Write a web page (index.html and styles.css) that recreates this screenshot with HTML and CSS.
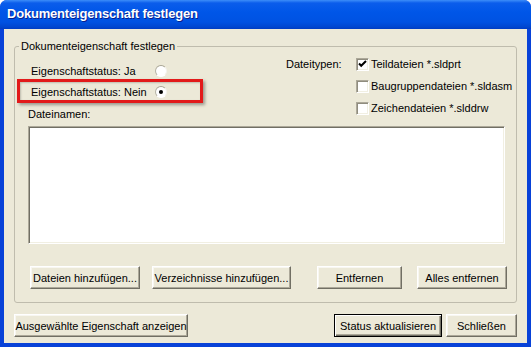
FILE: index.html
```html
<!DOCTYPE html>
<html lang="de">
<head>
    <meta charset="UTF-8">
    <title>Dokumenteigenschaft festlegen</title>
    <link rel="stylesheet" href="styles.css">
</head>
<body>
    <div class="window">
        <div class="titlebar">
            <span class="title">Dokumenteigenschaft festlegen</span>
        </div>

        <div class="client">
            <fieldset class="group">
                <legend>Dokumenteigenschaft festlegen</legend>

                <div class="top">
                    <div class="status">
                        <div class="status-row">
                            <span class="status-text">Eigenschaftstatus: Ja</span>
                            <span class="radio"></span>
                        </div>
                        <div class="status-row">
                            <span class="status-text">Eigenschaftstatus: Nein</span>
                            <span class="radio checked"></span>
                        </div>
                        <div class="highlight"></div>
                        <div class="field-label">Dateinamen:</div>
                    </div>

                    <div class="types">
                        <div class="types-label">Dateitypen:</div>
                        <div class="types-list">
                            <div class="check-row">
                                <span class="checkbox">
                                    <svg width="11" height="11" viewBox="0 0 11 11"><path d="M2 4.5 L4.2 6.8 L9 2" fill="none" stroke="#000" stroke-width="2"/></svg>
                                </span>
                                Teildateien *.sldprt
                            </div>
                            <div class="check-row">
                                <span class="checkbox"></span>
                                Baugruppendateien *.sldasm
                            </div>
                            <div class="check-row">
                                <span class="checkbox"></span>
                                Zeichendateien *.slddrw
                            </div>
                        </div>
                    </div>
                </div>

                <div class="listbox"></div>

                <div class="actions">
                    <button class="btn btn-add-files">Dateien hinzufügen...</button>
                    <button class="btn btn-add-dirs">Verzeichnisse hinzufügen...</button>
                    <button class="btn btn-remove">Entfernen</button>
                    <button class="btn btn-remove-all">Alles entfernen</button>
                </div>
            </fieldset>

            <div class="footer">
                <button class="btn btn-show">Ausgewählte Eigenschaft anzeigen</button>
                <div class="footer-right">
                    <button class="btn btn-default btn-update">Status aktualisieren</button>
                    <button class="btn btn-close">Schließen</button>
                </div>
            </div>
        </div>
    </div>
</body>
</html>
```

FILE: styles.css
```css
body {
    margin: 0;
    padding: 0;
    background-color: #fff;
    font-family: "Liberation Sans", Arial, sans-serif;
    font-size: 11px;
    color: #000;
}

.window {
    width: 531px;
    height: 347px;
    box-sizing: border-box;
    border-radius: 7px 7px 0 0;
    background-color: #0842d8;
    overflow: hidden;
}

.titlebar {
    height: 29px;
    box-sizing: border-box;
    padding: 6px 0 0 7px;
    background: linear-gradient(to bottom, #3d8ef9 0px, #0b5deb 3px, #0056e8 12px, #0052e2 22px, #0046d0 27px, #003cc2 29px);
}

.title {
    color: #fff;
    font-weight: bold;
    font-size: 13px;
    letter-spacing: -0.2px;
    text-shadow: 1px 1px 0 #0a1e8c;
}

.client {
    margin: 0 4px;
    height: 314px;
    box-sizing: border-box;
    padding: 11px 10px 6px;
    background-color: #ece9d8;
}

.group {
    margin: 0;
    padding: 0 12px 13px 13px;
    border: 1px solid #bfbcad;
    border-radius: 3px;
    min-width: 0;
}

.group legend {
    margin-left: -9px;
    padding: 0 2px;
    line-height: 13px;
}

.top {
    display: flex;
}

.status {
    position: relative;
    flex-shrink: 0;
    width: 258px;
    padding-top: 7px;
}

.status-row {
    display: flex;
    align-items: center;
    height: 21px;
    padding-left: 3px;
}

.status-text {
    width: 124px;
}

.radio {
    width: 12px;
    height: 12px;
    box-sizing: border-box;
    border-radius: 50%;
    border: 1px solid;
    border-color: #a7a493 #f4f3ee #fff #b5b2a4;
    background-color: #fff;
    position: relative;
}

.radio.checked::after {
    content: "";
    position: absolute;
    left: 3px;
    top: 3px;
    width: 4px;
    height: 4px;
    border-radius: 50%;
    background-color: #000;
}

.highlight {
    position: absolute;
    left: -11px;
    top: 26px;
    width: 186px;
    height: 24px;
    box-sizing: border-box;
    border: 3px solid #e21a1a;
    box-shadow: 2px 2px 3px rgba(0, 0, 0, 0.35), inset 1px 1px 2px rgba(0, 0, 0, 0.2);
}

.field-label {
    margin-top: 6px;
    line-height: 13px;
}

.types {
    display: flex;
    flex-shrink: 0;
    white-space: nowrap;
}

.types-label {
    width: 70px;
    height: 22px;
    line-height: 22px;
}

.check-row {
    display: flex;
    align-items: center;
    height: 22px;
}

.checkbox {
    width: 13px;
    height: 13px;
    box-sizing: border-box;
    margin-right: 2px;
    border: 1px solid;
    border-color: #aca899 #fff #fff #aca899;
    box-shadow: inset 1px 1px 0 #8f8c7e, inset -1px -1px 0 #f1efe2;
    background-color: #fff;
    display: flex;
    align-items: center;
    justify-content: center;
}

.listbox {
    margin-top: 5px;
    width: 477px;
    height: 118px;
    box-sizing: border-box;
    border: 1px solid;
    border-color: #aca899 #fff #fff #aca899;
    box-shadow: inset 1px 1px 0 #716f64, inset -1px -1px 0 #f1efe2;
    background-color: #fff;
}

.actions {
    display: flex;
    margin-top: 22px;
    padding-left: 2px;
}

.btn {
    flex-shrink: 0;
    height: 23px;
    padding: 0;
    box-sizing: border-box;
    font-family: "Liberation Sans", Arial, sans-serif;
    font-size: 11px;
    color: #000;
    background-color: #ece9d8;
    border: 1px solid;
    border-color: #fff #716f64 #716f64 #fff;
    box-shadow: inset -1px -1px 0 #aca899, inset 1px 1px 0 #f8f7f1;
}

.btn-add-files {
    width: 110px;
}

.btn-add-dirs {
    width: 139px;
    margin-left: 12px;
}

.btn-remove {
    width: 85px;
    margin-left: 26px;
}

.btn-remove-all {
    width: 90px;
    margin-left: 15px;
}

.footer {
    display: flex;
    justify-content: space-between;
    margin-top: 11px;
}

.footer-right {
    display: flex;
}

.btn-show {
    width: 174px;
}

.btn-default {
    border: 1px solid #000;
    box-shadow: inset 1px 1px 0 #fff, inset -1px -1px 0 #716f64, inset -2px -2px 0 #aca899;
}

.btn-update {
    width: 108px;
}

.btn-close {
    width: 71px;
    margin-left: 4px;
}
```
